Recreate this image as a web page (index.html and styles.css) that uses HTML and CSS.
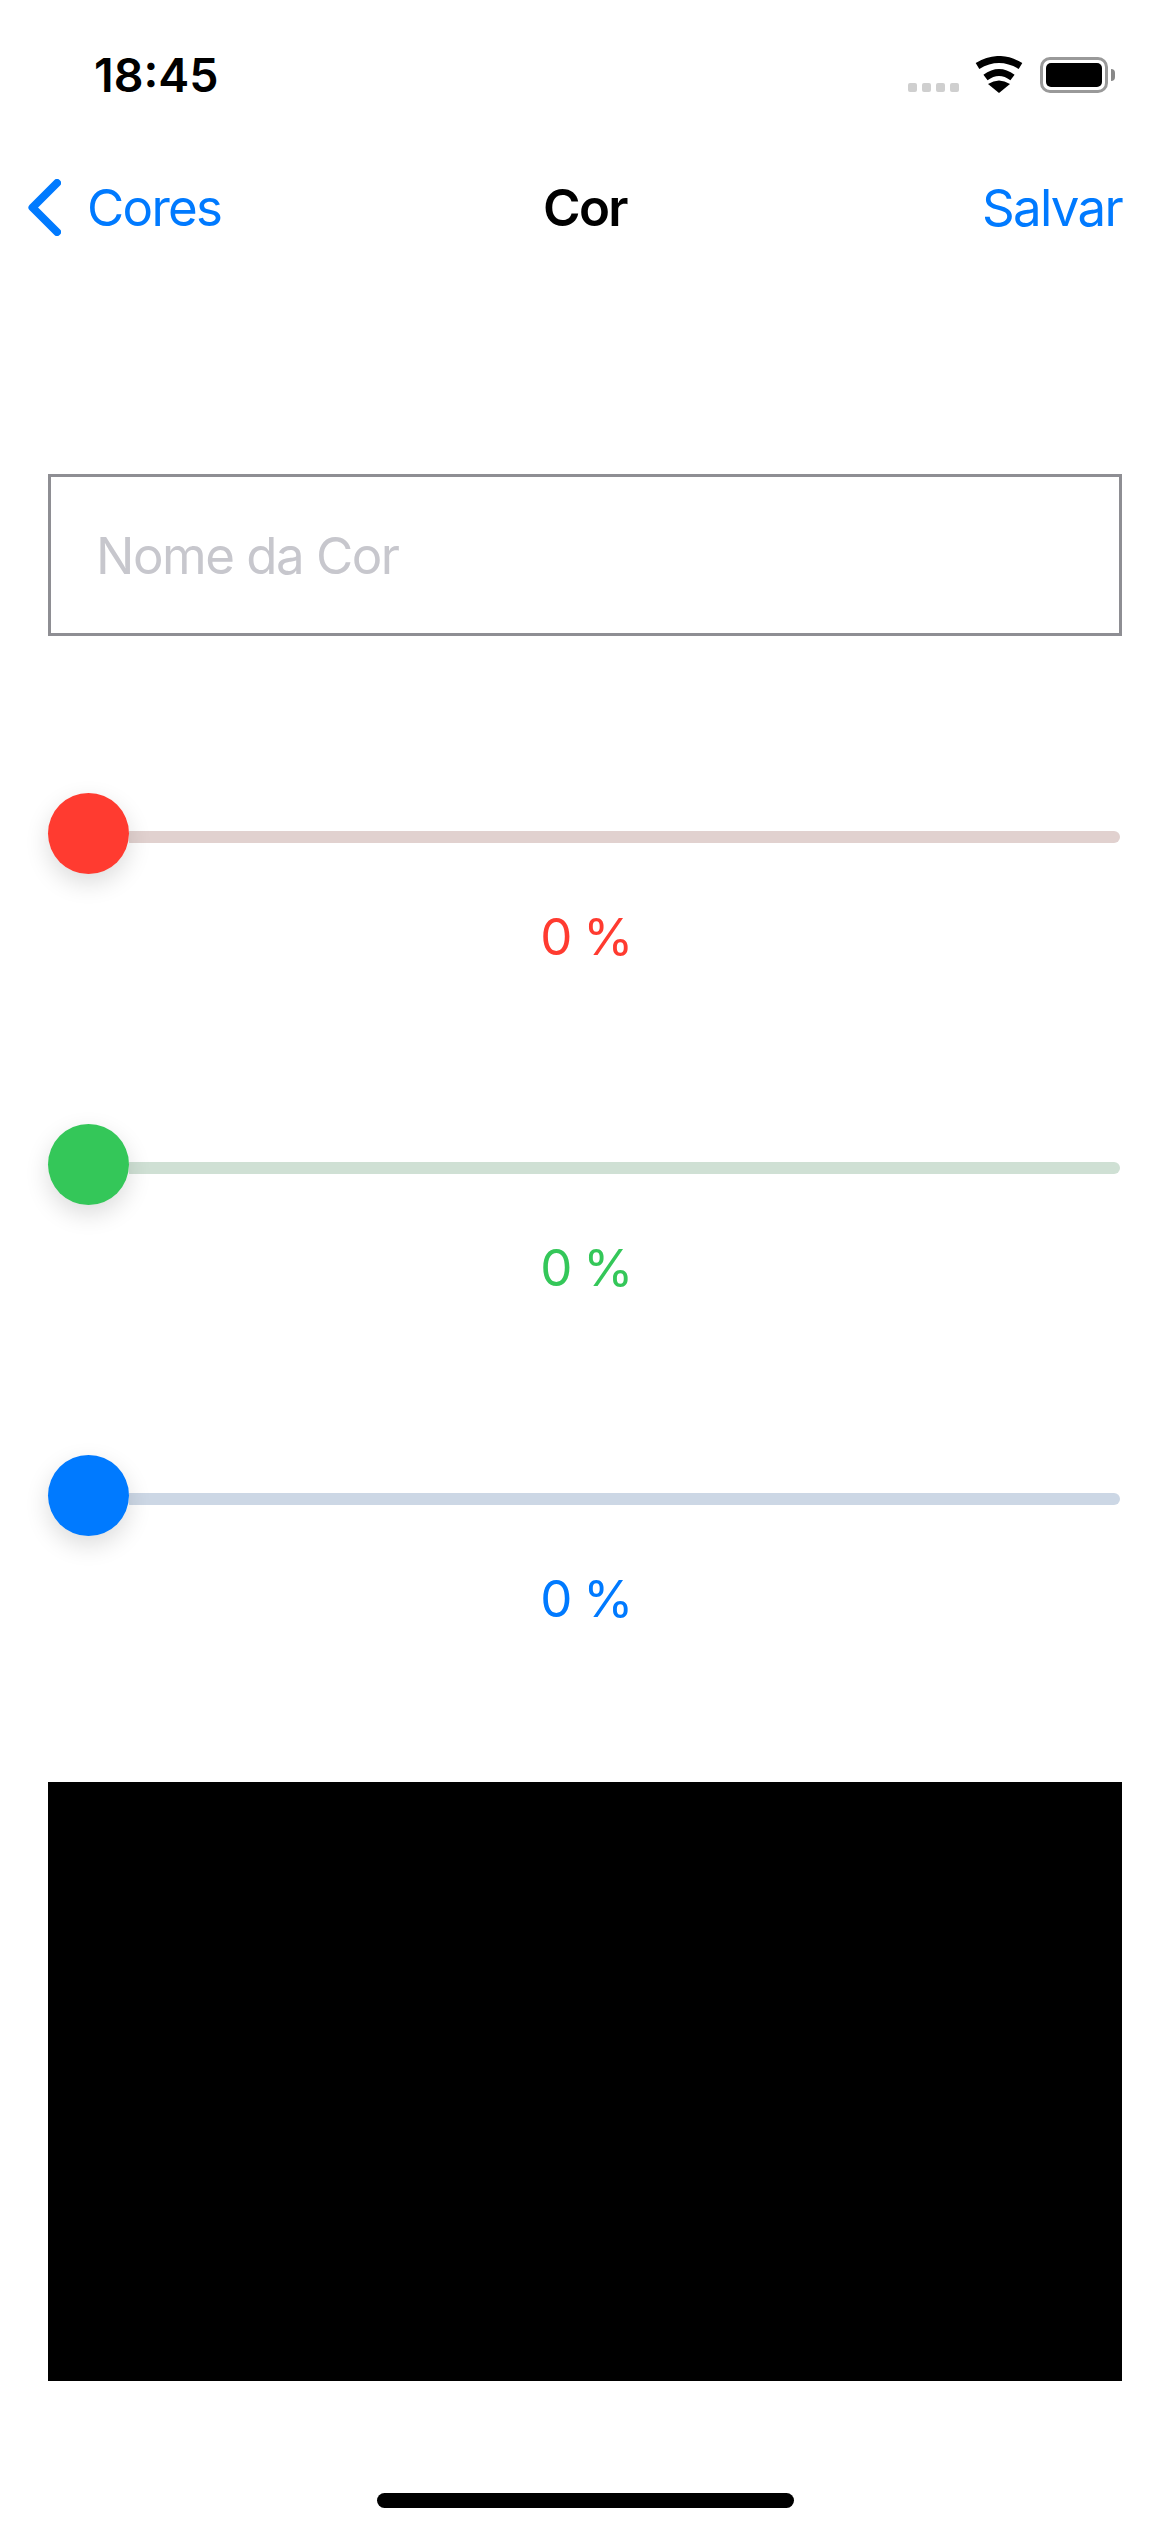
FILE: index.html
```html
<!DOCTYPE html>
<html lang="pt">
<head>
    <meta charset="UTF-8">
    <meta name="viewport" content="width=device-width, initial-scale=1.0">
    <title>Cor</title>
    <link rel="stylesheet" href="styles.css">
</head>
<body>
    <div class="status-bar">
        <span class="time">18:45</span>
        <div class="status-icons">
            <div class="signal"><i></i><i></i><i></i><i></i></div>
            <svg class="wifi" width="48" height="37" viewBox="0 0 48 37">
                <path d="M2.5 10 Q24 -3 45.5 10" fill="none" stroke="#000" stroke-width="7"/>
                <path d="M10.5 21.5 Q24 11.5 37.5 21.5" fill="none" stroke="#000" stroke-width="7"/>
                <path d="M13 28 Q24 21 35 28 L24 37 Z" fill="#000"/>
            </svg>
            <div class="battery"><div class="battery-level"></div></div>
            <div class="battery-cap"></div>
        </div>
    </div>

    <div class="nav">
        <a class="nav-back">
            <svg width="33" height="57" viewBox="0 0 33 57">
                <path d="M29 4 L4.5 28.5 L29 53" fill="none" stroke="#007aff" stroke-width="8" stroke-linecap="round" stroke-linejoin="round"/>
            </svg>
            Cores
        </a>
        <span class="nav-title">Cor</span>
        <a class="nav-save">Salvar</a>
    </div>

    <div class="content">
        <input class="color-name" type="text" placeholder="Nome da Cor">

        <div class="slider red">
            <div class="slider-row"><div class="thumb"></div><div class="track"></div></div>
            <p class="value">0 %</p>
        </div>
        <div class="slider green">
            <div class="slider-row"><div class="thumb"></div><div class="track"></div></div>
            <p class="value">0 %</p>
        </div>
        <div class="slider blue">
            <div class="slider-row"><div class="thumb"></div><div class="track"></div></div>
            <p class="value">0 %</p>
        </div>

        <div class="preview"></div>
    </div>

    <div class="home-bar"></div>
</body>
</html>
```

FILE: styles.css
```css
* {
    box-sizing: border-box;
}
body {
    margin: 0;
    width: 1170px;
    height: 2532px;
    display: flex;
    flex-direction: column;
    font-family: Inter, "Liberation Sans", sans-serif;
    font-size: 51px;
    letter-spacing: -1.7px;
    background-color: #fff;
    color: #000;
}
.status-bar {
    height: 150px;
    padding: 0 55px 0 94px;
    display: flex;
    justify-content: space-between;
    align-items: center;
}
.time {
    font-size: 46.5px;
    font-weight: 600;
    letter-spacing: 0;
}
.status-icons {
    display: flex;
    align-items: flex-end;
    margin-top: -2px;
}
.signal {
    display: flex;
    gap: 5px;
    margin-right: 16px;
    padding-bottom: 1px;
}
.signal i {
    width: 9px;
    height: 9px;
    border-radius: 2px;
    background-color: #cfcfcf;
}
.battery {
    width: 68px;
    height: 36px;
    margin-left: 17px;
    padding: 3px;
    border: 3px solid #999;
    border-radius: 10px;
}
.battery-level {
    height: 100%;
    background-color: #000;
    border-radius: 5px;
}
.battery-cap {
    width: 4px;
    height: 12px;
    margin: 0 0 12px 3px;
    background-color: #888;
    border-radius: 0 4px 4px 0;
}
.nav {
    height: 114px;
    padding: 0 48px;
    display: flex;
    justify-content: space-between;
    align-items: center;
    color: #007aff;
}
.nav-back {
    width: 300px;
    margin-left: -20px;
    display: flex;
    align-items: center;
    gap: 26px;
}
.nav-title {
    color: #000;
    font-weight: 600;
}
.nav-save {
    width: 280px;
    text-align: right;
}
.content {
    padding: 210px 48px 0;
}
.color-name {
    display: block;
    width: 100%;
    height: 162px;
    padding: 0 45px;
    border: 3px solid #8e8e93;
    border-radius: 0;
    outline: none;
    background: #fff;
    font-family: inherit;
    font-size: 51px;
    letter-spacing: -1.5px;
}
.color-name::placeholder {
    color: #c7c7cd;
    opacity: 1;
}
.slider {
    margin-top: 157px;
}
.slider-row {
    display: flex;
    align-items: center;
}
.thumb {
    position: relative;
    z-index: 1;
    flex: none;
    width: 81px;
    height: 81px;
    border-radius: 50%;
    box-shadow: 0 9px 24px rgba(0, 0, 0, 0.14);
}
.track {
    flex: 1;
    height: 12px;
    margin-top: 7px;
    margin-right: 2px;
    border-radius: 0 6px 6px 0;
}
.value {
    margin: 32px 0 -1px;
    padding-left: 2px;
    line-height: 62px;
    text-align: center;
}
.red .thumb { background-color: #ff3b30; }
.red .track { background-color: #e1d1cf; }
.red .value { color: #ff3b30; }
.green .thumb { background-color: #34c759; }
.green .track { background-color: #cfe0d4; }
.green .value { color: #34c759; }
.blue .thumb { background-color: #007aff; }
.blue .track { background-color: #ccd7e5; }
.blue .value { color: #007aff; }
.preview {
    height: 599px;
    margin-top: 153px;
    background-color: #000;
}
.home-bar {
    width: 417px;
    height: 15px;
    margin: auto auto 24px;
    border-radius: 8px;
    background-color: #000;
}
```
